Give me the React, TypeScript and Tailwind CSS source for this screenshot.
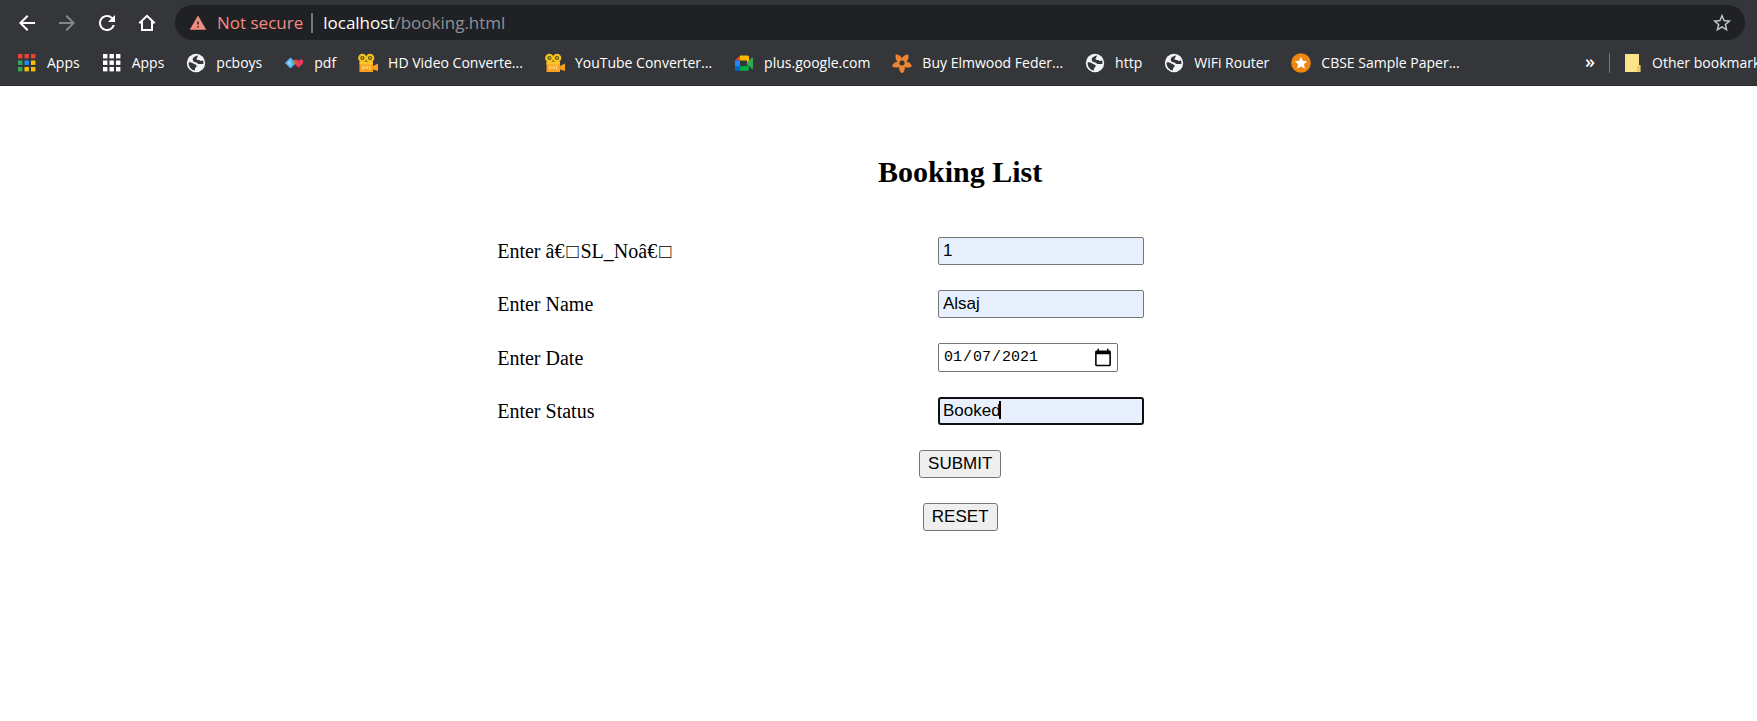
import React from "react";
import { MdArrowBack, MdArrowForward, MdRefresh, MdStarBorder, MdWarning } from "react-icons/md";

const gridCells = [0, 1, 2, 3, 4, 5, 6, 7, 8];
const appColors = ["#ea4335", "#ea4335", "#ea4335", "#34a853", "#1a8cff", "#fbbc05", "#34a853", "#fbbc05", "#fbbc05"];

function GridIcon({ colors }: { colors?: string[] }) {
  return (
    <svg viewBox="0 0 20 20" className="size-5 shrink-0" aria-hidden="true">
      {gridCells.map((i) => (
        <rect key={i} x={1 + (i % 3) * 6.5} y={1 + Math.floor(i / 3) * 6.5} width="4.4" height="4.4" fill={colors ? colors[i] : "#ffffff"} />
      ))}
    </svg>
  );
}

function GlobeIcon() {
  return (
    <svg viewBox="0 0 20 20" className="size-5 shrink-0" aria-hidden="true">
      <circle cx="10" cy="10" r="9.200" fill="#f1f3f4" />
      <path d="M12 2.600C8.600 3.200 6.300 5 6.800 7.300c.3 1.500 1.800 2 3.400 2.200 1.300.2 1.300 1.300 2.300 1.500.9.200 1.300-.2 2.300-.1h2.600c.2-1.400 0-2.600-.4-3.600-1.500.8-2.400.8-3.300 0-.8-.7-2.300-.2-3-.9-.7-.8.900-1.500 1.300-3.800z" fill="#35363a" />
      <path d="M2.600 9.400c1.800-.3 3.600.3 5 1.400 1.200.9 2.900.7 3.100 2.100.1 1.100-1.500 1.200-1.700 2.400-.1.800.1 1.300-.1 2.100-3.700-.5-6.500-3.800-6.300-8z" fill="#35363a" />
    </svg>
  );
}

function HeartsIcon() {
  return (
    <svg viewBox="0 0 20 20" className="size-5 shrink-0" aria-hidden="true">
      <path d="M6.500 4.500 12 10l-5.500 5.500L1 10z" fill="#5bb8f0" />
      <path d="m3.500 10 3-3v6z" fill="#9bd8fa" />
      <path d="M14.500 14.800 10 10.200c-1.300-2 .2-4 2-3.800 1.200 0 2 .6 2.500 1.500.5-.9 1.300-1.500 2.500-1.500 2 0 3 2 2 3.800z" fill="#f0385c" />
      <circle cx="11" cy="9.600" r="1.700" fill="#9a8b2f" />
    </svg>
  );
}

function CameraIcon() {
  return (
    <svg viewBox="0 0 20 20" className="size-5 shrink-0" aria-hidden="true">
      <path d="M1.500 9.500h13.500v3.500l5-2.500v7.500l-5-1.500V19h-13.500z" fill="#f9a11b" />
      <path d="M1.500 8.500h13.500v3h-13.500z" fill="#ffc52a" />
      <circle cx="4.400" cy="5" r="3.200" fill="#5e5416" stroke="#f7c21e" strokeWidth="2.200" />
      <circle cx="12" cy="5" r="3.200" fill="#5e5416" stroke="#f7c21e" strokeWidth="2.200" />
      <circle cx="4.400" cy="5" r=".9" fill="#e0b31e" />
      <circle cx="12" cy="5" r=".9" fill="#e0b31e" />
      <path d="M4.500 13v3h1.200l.8-1.500-.8-1.500zM8 13v3M9.500 13v3M12.800 13h-1.500v3h1.500" stroke="#ffe3a8" strokeWidth=".8" fill="none" />
    </svg>
  );
}

function MeetIcon() {
  return (
    <svg viewBox="0 0 20 20" className="size-5 shrink-0" aria-hidden="true">
      <path d="M1 7.500 6 2.500v5z" fill="#ea4335" />
      <path d="M1 7.500h5v5.500H1z" fill="#2684fc" />
      <path d="M1 13h5v4.800H2.500A1.500 1.500 0 0 1 1 16.300z" fill="#0066da" />
      <path d="M6 2.500h7.500A1.500 1.500 0 0 1 15 4v5l-2 1.500v-3H6z" fill="#ffba00" />
      <path d="M6 13h7v-3L15 12.500v3.800a1.500 1.500 0 0 1-1.500 1.500H6z" fill="#00ac47" />
      <path d="m12.500 10.200 5.300-5.500c.5-.4 1.200-.1 1.200.5v10c0 .6-.7.900-1.200.5z" fill="#34a853" />
    </svg>
  );
}

function FlowerIcon() {
  return (
    <svg viewBox="0 0 20 20" className="size-5 shrink-0" aria-hidden="true">
      {[36, 108, 180, 252, 324].map((a) => (
        <path key={a} transform={`rotate(${a} 10 10)`} d="M10-.5C12.800 1.500 13.500 5 12.200 8L10 7.500 7.800 8C6.500 5 7.200 1.500 10-.5z" fill="#ee8433" />
      ))}
      <circle cx="10" cy="10" r="3.200" fill="none" stroke="#ee8433" strokeWidth="1.400" />
      <circle cx="10" cy="10" r="2.500" fill="#35363a" />
    </svg>
  );
}

function StarBadgeIcon() {
  return (
    <svg viewBox="0 0 20 20" className="size-5 shrink-0" aria-hidden="true">
      <circle cx="10" cy="10" r="9.800" fill="#f0860e" />
      <path d="m10 3.700 1.900 4.100 4.400.5-3.300 3 .9 4.500L10 13.600l-3.900 2.200.9-4.500-3.300-3 4.400-.5z" fill="#fff" />
    </svg>
  );
}

function FolderIcon() {
  return (
    <svg viewBox="0 0 18 20" className="h-5 w-[18px] shrink-0" aria-hidden="true">
      <path d="M1 1h14v11h1.500v7H1z" fill="#fbe38b" />
      <path d="M13 19v-5.500l1.500-1.500H16v7z" fill="#f3cf55" />
    </svg>
  );
}

const bookmarks: { label: string; icon: React.ReactNode }[] = [
  { label: "Apps", icon: <GridIcon colors={appColors} /> },
  { label: "Apps", icon: <GridIcon /> },
  { label: "pcboys", icon: <GlobeIcon /> },
  { label: "pdf", icon: <HeartsIcon /> },
  { label: "HD Video Converte...", icon: <CameraIcon /> },
  { label: "YouTube Converter...", icon: <CameraIcon /> },
  { label: "plus.google.com", icon: <MeetIcon /> },
  { label: "Buy Elmwood Feder...", icon: <FlowerIcon /> },
  { label: "http", icon: <GlobeIcon /> },
  { label: "WiFi Router", icon: <GlobeIcon /> },
  { label: "CBSE Sample Paper...", icon: <StarBadgeIcon /> },
];

function BrowserBar() {
  return (
    <header className="overflow-hidden border-b border-[#292a2d] bg-[#35363a] font-['Segoe_UI','Open_Sans',sans-serif] text-white">
      <div className="flex items-center pt-[5px] pr-3 pl-[15px]">
        <nav className="flex shrink-0 gap-4 pr-4" aria-label="Browser">
          <button type="button" aria-label="Back"><MdArrowBack className="size-6" /></button>
          <button type="button" aria-label="Forward"><MdArrowForward className="size-6 text-[#85868a]" /></button>
          <button type="button" aria-label="Reload"><MdRefresh className="size-6" /></button>
          <button type="button" aria-label="Home">
            <svg viewBox="0 0 24 24" className="size-6" fill="none" stroke="currentColor" strokeWidth="2">
              <path d="M4.300 12.200 12 4.800l7.700 7.400M7 10.500V19h10v-8.500" />
            </svg>
          </button>
        </nav>
        <div className="flex h-[35px] min-w-0 flex-1 items-center rounded-full bg-[#202124] pr-3 pl-3.5 text-[17px]">
          <MdWarning className="size-[18px] shrink-0 text-[#f28b82]" />
          <span className="pl-2.5 whitespace-nowrap text-[#f28b82]">Not secure</span>
          <span className="ml-2 mr-2.5 h-5 w-0.5 bg-[#75767a]" />
          <a href="#booking" className="flex-1 whitespace-nowrap">
            localhost<span className="text-[#8f9195]">/booking.html</span>
          </a>
          <button type="button" aria-label="Bookmark this page"><MdStarBorder className="size-[22px] text-[#c4c7cb]" /></button>
        </div>
      </div>
      <div className="flex h-[45px] items-center pl-[17px] text-sm whitespace-nowrap">
        <nav className="flex items-center gap-[22px]" aria-label="Bookmarks">
          {bookmarks.map((b, i) => (
            <a key={i} href="#bookmark" className="flex items-center gap-2.5">
              {b.icon}
              {b.label}
            </a>
          ))}
        </nav>
        <div className="ml-auto -mr-2.5 flex shrink-0 items-center">
          <button type="button" aria-label="More bookmarks" className="pr-3.5 pb-1 text-lg font-semibold">»</button>
          <span className="h-5 w-px bg-[#75767a]" />
          <a href="#other" className="flex items-center gap-2.5 pl-3.5">
            <FolderIcon />
            Other bookmarks
          </a>
        </div>
      </div>
    </header>
  );
}

const field = "h-7 w-[206px] rounded-xs border border-[#767676] bg-[#e8f0fe] px-1 font-['Liberation_Sans',Arial,sans-serif] text-[17px] text-black";
const button = "h-7 rounded-[3px] border border-[#767676] bg-[#efefef] px-2 font-['Liberation_Sans',Arial,sans-serif] text-[17px] text-black";

function Box() {
  return <span className="px-0.5">□</span>;
}

export default function App() {
  return (
    <div className="min-h-screen overflow-x-hidden bg-white">
      <BrowserBar />
      <main className="ml-[28.3%] w-[52.7%] pt-[68px] font-['Liberation_Serif','Times_New_Roman',serif] text-black">
        <h1 className="text-center text-3xl font-bold">Booking List</h1>
        <form className="grid grid-cols-[47.600%_1fr] items-center gap-y-[25px] pt-[47px] text-xl" onSubmit={(e) => e.preventDefault()}>
          <label htmlFor="sl">Enter â€<Box />SL_Noâ€<Box /></label>
          <div className="flex"><input id="sl" type="text" defaultValue="1" className={field} /></div>
          <label htmlFor="name">Enter Name</label>
          <div className="flex"><input id="name" type="text" defaultValue="Alsaj" className={field} /></div>
          <label htmlFor="date">Enter Date</label>
          <div className="flex">
            <input
              id="date"
              type="date"
              defaultValue="2021-01-07"
              className="h-[29px] w-[180px] rounded-xs border border-[#767676] bg-white pr-1 pl-1 font-['Liberation_Mono',monospace] text-[15px] text-black [&::-webkit-calendar-picker-indicator]:size-5 [&::-webkit-calendar-picker-indicator]:p-0"
            />
          </div>
          <label htmlFor="status">Enter Status</label>
          <div className="relative flex">
            <input
              id="status"
              type="text"
              defaultValue="Booked"
              className="h-7 w-[206px] rounded-[3px] border-2 border-[#101010] bg-[#e8f0fe] px-[3px] font-['Liberation_Sans',Arial,sans-serif] text-[17px] text-black caret-transparent outline-none"
            />
            <span className="absolute top-1 left-[61px] h-[18px] w-0.5 bg-black" />
          </div>
          <div className="col-span-2 flex justify-center"><button type="submit" className={button}>SUBMIT</button></div>
          <div className="col-span-2 flex justify-center"><button type="reset" className={button}>RESET</button></div>
        </form>
      </main>
    </div>
  );
}
